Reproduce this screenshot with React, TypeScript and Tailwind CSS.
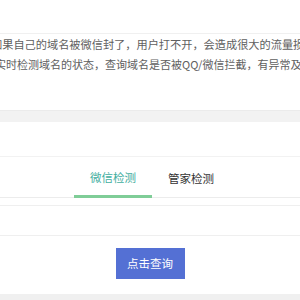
export default function App() {
  const font = { fontFamily: '"Noto Sans CJK SC", "Microsoft YaHei", sans-serif' };
  return (
    <div className="w-[300px] h-[300px] overflow-hidden bg-white" style={font}>
      <div className="h-[34px] border-b border-[#f0f0f0]" />
      <div className="h-[76px] text-[11.2px] leading-[20px] text-[#606060] whitespace-nowrap">
        <div className="ml-[-9px]">如果自己的域名被微信封了，用户打不开，会造成很大的流量损失，</div>
        <div className="ml-[-5px] text-[11px]">实时检测域名的状态，查询域名是否被QQ/微信拦截，有异常及时处理</div>
      </div>
      <div className="h-[12px] bg-[#f2f2f2] border-t border-[#ebebeb]" />
      <div className="h-[35px] border-b border-[#f2f2f2]" />
      <div className="h-[41px] border-b border-[#ececec] flex pl-[74px]">
        <div className="w-[78px] flex items-center justify-center text-[11.5px] text-[#3fae9e] border-b-[3px] border-[#7fcd97] mb-[-1px] pt-[4px]">微信检测</div>
        <div className="w-[78px] flex items-center justify-center text-[11.5px] text-[#333] pt-[4px]">管家检测</div>
      </div>
      <div className="h-[7px]" />
      <div className="h-[31px] border-t border-b border-[#efefef]" />
      <div className="flex justify-center pt-[12px]">
        <div className="w-[69px] h-[31px] bg-[#5470d4] text-white text-[11.5px] flex items-center justify-center">点击查询</div>
      </div>
      <div className="h-[15px]" />
      <div className="h-[10px] bg-[#f0f0f0]" />
    </div>
  );
}
